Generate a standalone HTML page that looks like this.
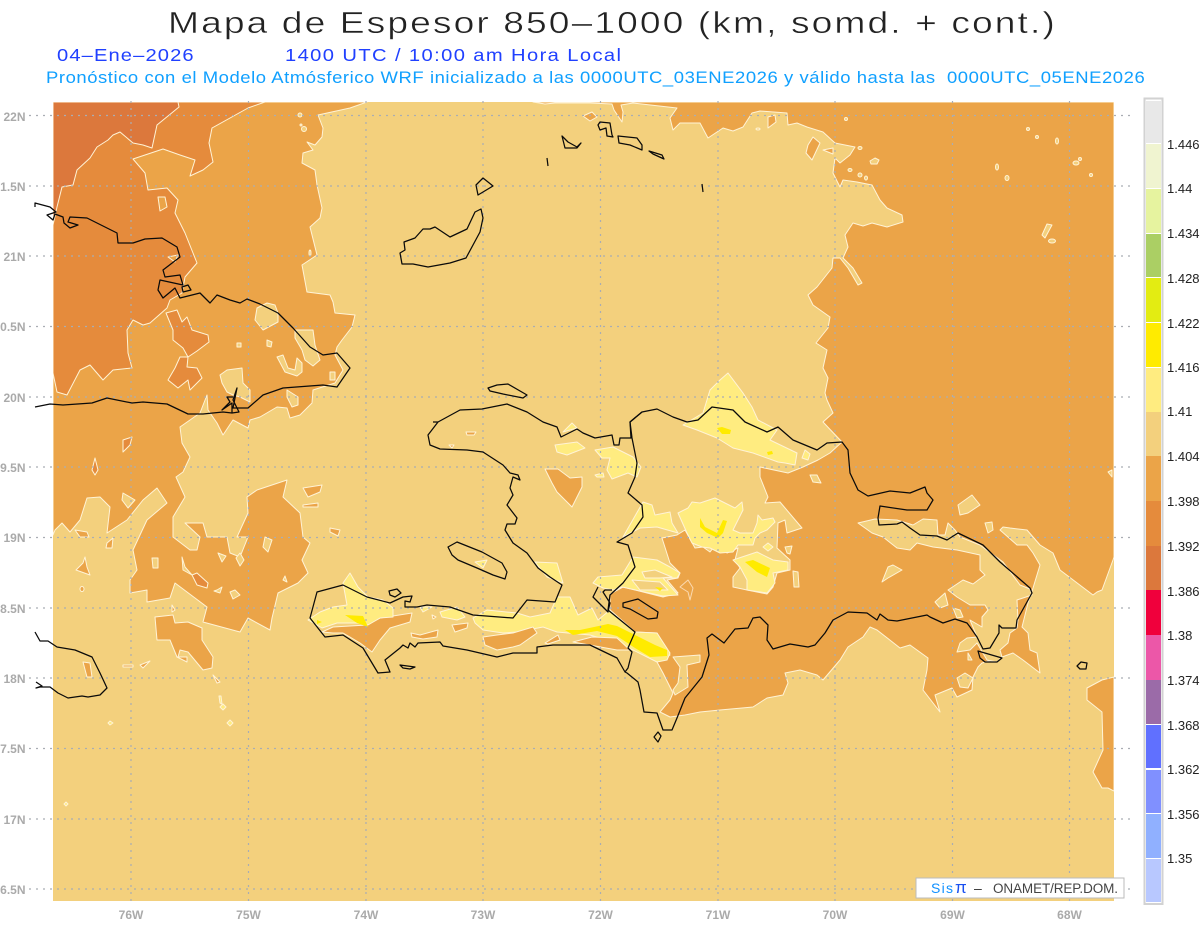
<!DOCTYPE html>
<html><head><meta charset="utf-8"><title>Mapa de Espesor</title>
<style>
html,body{margin:0;padding:0;background:#fff;width:1200px;height:927px;overflow:hidden}
svg{display:block}
text{font-family:"Liberation Sans",sans-serif}
.c{stroke:#fff3d6;stroke-width:1;stroke-linejoin:round}
.b{fill:#f3d07d}.o{fill:#eba448}.d{fill:#e58b3c}.x{fill:#dc783c}.y{fill:#ffec80}.z{fill:#ffeb00}
.k{fill:none;stroke:#0a0a0a;stroke-width:1.25;stroke-linejoin:round}
.g{stroke:#a9adb3;stroke-width:1.2;stroke-dasharray:2 5;fill:none}
.la{fill:#aaa;font-size:12px;font-weight:bold}
.cb{fill:#222;font-size:13px}
</style></head><body>
<svg width="1200" height="927" viewBox="0 0 1200 927" xmlns="http://www.w3.org/2000/svg">
<defs><clipPath id="m"><rect x="53" y="102" width="1061" height="799"/></clipPath></defs>
<text transform="translate(168,33) scale(1.2,1)" font-size="31" textLength="739" fill="#222" stroke="#fff" stroke-width=".45">Mapa de Espesor 850–1000 (km, somd. + cont.)</text>
<text transform="translate(57,61) scale(1.12,1)" font-size="18" textLength="122" fill="#2040ff">04–Ene–2026</text>
<text transform="translate(285,61) scale(1.12,1)" font-size="18" textLength="300" fill="#2040ff">1400 UTC / 10:00 am Hora Local</text>
<text transform="translate(46,83) scale(1.12,1)" font-size="16.5" textLength="981" fill="#10a0ff" xml:space="preserve">Pronóstico con el Modelo Atmósferico WRF inicializado a las 0000UTC_03ENE2026 y válido hasta las  0000UTC_05ENE2026</text>

<g clip-path="url(#m)">
<rect x="53" y="102" width="1061" height="799" class="b"/>
<!-- West orange A -->
<polygon class="o c" points="53,102 367,102 350,108 318,115 323,128 322,137 315,145 307,142 313,150 303,153 302,163 315,170 317,185 322,208 320,218 310,227 317,255 302,265 307,292 330,295 333,302 335,313 355,315 352,327 342,340 337,347 335,355 343,370 335,383 313,390 312,403 300,415 290,418 287,408 277,407 260,417 250,420 248,428 233,420 223,435 217,423 208,410 207,395 200,413 190,420 180,427 182,443 190,457 183,472 176,477 185,497 173,517 173,537 190,550 197,550 200,537 185,523 203,523 207,537 227,537 230,553 240,557 248,537 237,537 248,513 247,497 257,490 287,480 283,497 300,513 303,537 310,543 302,560 308,573 298,583 278,593 272,618 270,630 248,618 240,632 203,622 207,607 175,583 170,598 147,602 147,590 130,593 130,580 137,570 133,550 147,520 167,503 157,488 143,500 127,520 107,533 110,507 100,497 87,498 80,520 70,532 62,523 55,530 53,535"/>
<polygon class="o c" points="155,617 173,615 175,623 188,622 202,628 202,640 213,657 212,668 203,670 188,652 180,650 178,657 187,657 187,662 177,657 170,640 157,640"/>
<!-- East orange C -->
<polygon class="o c" points="533,102 545,104 555,103 590,103 612,104 614,110 622,122 623,112 621,105 633,103 677,108 670,118 673,130 680,123 700,123 708,138 723,128 733,131 743,127 752,113 760,111 787,113 788,125 797,123 807,127 823,132 835,143 855,147 850,155 840,163 835,158 833,173 840,187 843,180 857,182 872,185 880,200 887,208 902,215 903,222 887,227 872,223 863,226 853,223 845,235 848,247 843,258 853,268 862,283 858,285 848,268 840,258 833,258 832,268 817,287 808,295 813,305 830,317 828,328 816,343 827,350 823,368 828,378 825,393 827,400 833,413 823,422 842,442 830,453 818,460 803,467 788,473 760,467 760,477 768,497 765,503 780,502 802,528 787,533 785,520 778,523 777,548 790,560 790,570 777,573 773,587 767,594 747,590 733,587 733,577 740,568 735,560 738,548 727,553 717,543 710,552 703,547 695,548 685,530 677,535 662,538 670,563 680,573 678,578 667,580 678,593 663,597 623,587 610,594 610,610 635,632 657,633 670,655 657,662 663,673 673,693 670,700 660,712 670,717 685,715 700,712 720,710 753,707 767,698 783,695 788,683 785,673 800,670 817,675 823,680 840,660 848,647 863,637 870,627 877,630 900,648 910,645 928,658 927,670 923,690 940,712 935,695 952,688 957,697 972,690 973,677 978,667 982,663 1002,657 1013,653 1023,660 1040,673 1037,653 1030,650 1028,633 1022,627 1028,603 1033,588 1040,565 1033,553 1027,545 1017,545 1000,530 1003,527 1010,528 1027,530 1040,545 1053,553 1060,570 1093,595 1097,592 1102,590 1113,560 1114,557 1114,102"/>
<polygon class="o c" points="1114,677 1102,680 1087,688 1087,700 1102,712 1103,750 1093,772 1102,788 1108,788 1114,791"/>
<polygon class="b c" points="858,523 875,519 897,520 913,525 923,519 937,520 938,535 945,535 948,523 955,530 960,537 980,545 1003,562 1020,585 1030,589 1032,595 1023,598 1017,600 1018,620 1017,628 1010,633 1008,643 1000,650 1002,657 997,662 987,660 977,643 970,650 957,652 960,643 967,638 977,637 970,620 982,627 982,617 988,610 985,605 970,605 957,597 948,590 963,580 973,584 985,575 980,570 980,555 957,550 933,547 917,543 910,550 897,548 883,537 872,533"/>
<!-- dark orange -->
<polygon class="d c" points="265,102 248,108 212,128 209,143 213,162 203,170 190,176 195,160 180,155 163,149 133,159 145,173 148,190 167,188 178,200 175,213 185,233 193,253 197,263 185,277 182,293 170,300 167,308 150,323 143,325 133,320 127,330 128,353 132,368 113,370 103,380 90,365 80,370 67,395 57,392 53,373 53,102"/>
<polygon class="x c" points="53,102 178,102 179,107 157,125 152,148 143,145 133,143 120,132 113,135 108,140 97,147 90,158 77,170 73,185 62,187 57,207 53,225"/>
<polygon class="o c" points="158,197 165,197 167,207 160,211"/>
<polygon class="o c" points="168,257 178,255 175,262"/>
<polygon class="d c" points="166,313 177,310 182,322 187,317 192,330 208,335 209,342 197,351 188,357 183,348 173,340 173,330"/>
<polygon class="d c" points="180,357 188,357 187,367 197,368 202,378 190,390 188,380 178,388 168,380 175,368"/>
<polygon class="d c" points="123,440 132,437 130,445 123,452"/>
<polygon class="d c" points="95,458 98,470 95,475 92,470"/>
<polygon class="d c" points="192,575 197,573 208,583 207,588 197,585"/>
<polygon class="d c" points="680,587 688,580 693,588 690,600 688,592" style="fill:#eba448;stroke:#fbd9b0"/>
<!-- base islands in orange -->
<g class="b c">
<polygon points="257,308 267,303 275,305 278,313 278,322 263,330 255,320"/>
<polygon points="295,330 313,330 315,345 320,360 313,366 305,360 302,350 295,338"/>
<polygon points="277,357 283,355 288,368 295,370 297,358 302,363 302,372 297,376 285,372"/>
<polygon points="220,375 227,370 242,368 243,383 250,390 250,402 240,397 233,395 227,392 222,383"/>
<polygon points="287,390 298,397 298,405 292,407 287,397"/>
<polygon points="330,372 335,372 335,380 330,380"/>
<polygon points="237,343 241,343 241,347 237,347"/><polygon points="267,340 272,342 271,347 267,346"/>
<polygon points="123,493 135,500 128,508 122,500"/>
<polygon points="265,537 272,540 268,552 263,547"/>
<polygon points="218,553 226,556 222,562"/><polygon points="240,553 244,560 240,566 236,558"/>
<polygon points="152,558 158,558 158,568 153,568"/><polygon points="182,557 185,567 192,575 183,570"/>
<polygon points="230,592 235,590 240,595 233,599"/><polygon points="217,590 222,587 220,593 214,591"/>
<polygon points="285,576 287,582 283,580"/>
<polygon points="673,657 700,655 700,662 687,665 688,687 675,695 673,690 678,683 680,667"/>
<polygon points="882,582 888,567 893,565 902,570 888,578"/>
<polygon points="958,505 972,495 980,505 968,513 960,515"/>
<polygon points="985,523 992,522 993,530 988,533"/>
<polygon points="935,602 945,593 948,605 940,608"/>
<polygon points="957,678 965,673 973,678 968,688 960,687"/>
<polygon points="953,608 960,610 963,617 957,618"/>
<polygon points="968,653 972,660 968,660"/>
<polygon points="810,475 817,475 821,483 813,482"/>
<polygon points="1108,472 1112,470 1112,477"/>
<polygon points="785,547 792,546 790,554 787,553"/>
<polygon points="793,571 798,572 799,587 794,587"/>
<polygon points="870,161 875,158 879,160 877,164 871,164"/>
<polygon points="1042,235 1047,224 1052,225 1045,238"/>
<ellipse cx="860" cy="148" rx="2" ry="1.5"/><ellipse cx="850" cy="170" rx="2" ry="1.5"/><ellipse cx="860" cy="175" rx="2" ry="2"/><ellipse cx="866" cy="178" rx="1.5" ry="2"/>
<ellipse cx="1052" cy="241" rx="3.5" ry="2"/><ellipse cx="997" cy="167" rx="1.5" ry="3"/><ellipse cx="1007" cy="178" rx="2" ry="2.5"/><ellipse cx="1028" cy="129" rx="1.5" ry="1.5"/><ellipse cx="1037" cy="137" rx="1.5" ry="1.5"/><ellipse cx="1057" cy="141" rx="1.5" ry="3"/><ellipse cx="1076" cy="163" rx="3" ry="2"/><ellipse cx="1080" cy="159" rx="1.5" ry="1.5"/><ellipse cx="1091" cy="175" rx="1.5" ry="1.5"/><ellipse cx="846" cy="119" rx="1.5" ry="1.5"/><ellipse cx="758" cy="129" rx="2" ry="1"/>
<ellipse cx="300" cy="115" rx="2" ry="2"/><ellipse cx="304" cy="129" rx="2.5" ry="2.5"/><ellipse cx="301" cy="125" rx="1" ry="1"/>
<ellipse cx="310" cy="253" rx="1" ry="3"/>
</g>
<!-- orange blobs in base -->
<g class="o c">
<polygon points="768,117 775,115 776,122 768,128"/>
<polygon points="813,137 820,143 812,160 806,153 808,145"/>
<polygon points="823,150 833,148 833,154"/>
<polygon points="583,116 592,112 597,117 590,121"/>
<polygon points="75,530 87,532 89,537 80,537" />
<polygon points="107,543 113,538 112,548 106,548"/>
<polygon points="85,557 87,567 90,575 76,570 83,563"/>
<polygon points="303,488 322,485 320,492 308,497"/>
<polygon points="303,505 318,503 318,507 303,507"/>
<polygon points="330,528 340,530 338,536 330,532"/>
<polygon points="83,662 90,663 92,677 87,677"/>
<polygon points="123,665 133,665 133,667 123,667"/>
<polygon points="140,665 150,661 143,668"/>
<polygon points="213,675 220,682 217,683"/>
<polygon points="172,605 175,610 172,612"/>
<ellipse cx="82" cy="589" rx="2" ry="2.5"/>
<polygon points="545,469 558,469 570,478 582,477 582,487 572,507 557,492 552,483"/>
<polygon points="322,632 333,627 367,625 380,618 412,613 410,622 390,628 380,640 372,652 360,643 343,633 333,633"/>
<polygon points="411,633 420,635 438,630 437,637 423,639 412,637"/>
<polygon points="452,625 468,623 467,628 455,632"/>
<polygon points="466,432 476,432 474,435 467,435"/><polygon points="449,445 454,445 452,448"/>
<polygon points="432,615 436,617 433,619"/>
</g>
<!-- yellow -->
<g class="y c">
<polygon points="683,425 703,413 710,390 720,380 728,373 743,393 752,407 758,420 777,430 770,440 797,453 795,465 785,463 778,462 753,453 733,448 717,438 697,430"/>
<polygon points="678,513 688,508 692,502 700,503 715,498 723,502 735,508 742,502 743,510 733,530 740,533 753,533 757,523 758,515 762,520 773,518 775,522 767,530 760,533 755,538 753,545 738,545 733,552 720,553 710,548 702,547 692,543 687,533"/>
<polygon points="733,560 757,552 773,560 788,562 788,570 773,573 775,583 767,593 747,590 747,580 740,567"/>
<polygon points="593,583 598,577 622,575 633,557 657,560 670,567 680,573 677,578 663,578 678,595 663,596 622,587 613,590 603,588"/>
<polygon points="473,618 487,610 517,613 530,617 550,613 557,597 570,597 578,615 592,608 598,620 610,610 635,632 657,633 670,653 667,660 657,662 633,650 617,643 590,635 557,632 543,627 517,632 503,633 483,630 475,623"/>
<polygon points="308,620 320,612 333,607 347,605 343,583 350,573 358,587 368,597 383,600 393,608 393,617 380,618 368,625 357,623 337,623 322,628"/>
<polygon points="440,612 457,607 465,617 457,620 442,617"/>
<polygon points="420,607 432,607 423,612"/>
<polygon points="555,445 577,442 585,448 567,455 557,452"/>
<polygon points="563,432 572,423 577,428"/>
<polygon points="595,450 613,447 633,457 641,467 637,477 628,473 612,479 607,470 610,458 602,458"/>
<polygon points="595,475 603,473 604,477 597,477"/>
<polygon points="623,537 643,502 652,505 655,515 670,512 672,523 678,533 657,527 640,528"/>
<polygon points="535,562 557,563 563,583 547,577"/>
<polygon points="475,562 487,560 483,568"/>
<polygon points="763,547 768,543 773,547 768,551"/>
<polygon points="223,704 226,707 223,710 220,707"/><polygon points="230,720 233,723 230,726 227,723"/><polygon points="110,721 113,723 110,725 108,723"/><polygon points="66,802 68,804 66,806 64,804"/><polygon points="219,696 221,696 222,704 220,703"/>
<polygon points="805,450 810,454 808,460 802,458"/>
</g>
<g class="b c">
<polygon points="642,572 655,570 672,577 660,578 645,578"/>
<polygon points="632,580 660,582 668,590 640,590"/>
</g>
<g class="o c">
<polygon points="573,642 592,637 617,638 630,650 617,650"/>
<polygon points="483,637 497,635 513,633 533,627 537,633 520,645 513,647 497,650 485,645"/>
<polygon points="545,643 558,635 560,640 548,644"/>
</g>
<g fill="#ffeb00" stroke="none">
<polygon points="717,428 722,427 731,430 730,434 722,434"/>
<polygon points="767,452 772,451 773,454 768,455"/>
<polygon points="700,518 705,527 717,533 723,520 727,521 723,533 718,538 707,533 700,527"/>
<polygon points="745,562 753,560 770,568 767,577 757,572"/>
<polygon points="655,587 663,588 660,591"/>
<polygon points="565,630 580,630 608,624 617,626 633,634 655,645 667,650 667,656 650,657 635,648 617,636 597,631 573,635"/>
<polygon points="345,615 363,616 368,627 357,623"/>
<polygon points="317,620 322,622 317,624"/>
</g>
</g>

<!-- grid -->
<g class="g">
<path d="M29 115.5H1132M29 186H1132M29 256H1132M29 326.5H1132M29 397H1132M29 467H1132M29 537.5H1132M29 608H1132M29 678H1132M29 748.5H1132M29 819H1132M29 889H1132"/>
<path d="M131 101V905M248.5 101V905M366 101V905M483 101V905M600.5 101V905M718 101V905M835 101V905M952.5 101V905M1069.5 101V905"/>
</g>

<!-- coast -->
<g class="k">
<path d="M35 207L35 203 50 207 56 212 47 215 53 220 55 214 63 217 64 223 70 228 78 225 68 222 70 217 87 218 117 233 118 243 133 243 145 239 162 238 177 247 180 257 163 270 165 277 180 275 183 285 160 280 158 290 163 298 175 288 180 298 200 293 210 303 217 295 230 300 240 303 247 299 260 304 278 313 293 328 310 347 323 355 337 353 350 368 337 387 323 385 283 388 263 395 248 408 233 408 237 388 233 400 239 412 232 413 232 403 222 410 230 402 227 397 233 397M232 413L223 412 203 414 188 414 167 404 143 402 132 403 107 398 92 403 63 405 50 404 35 407"/>
<path d="M182 287L188 285 191 290 183 292Z"/>
<path d="M35 632L40 641 48 641 57 647 75 650 92 657 100 673 107 688 100 695 88 697 82 696 68 698 58 693 50 687 40 687 36 688 42 686 36 682"/>
<path d="M433 422L438 422 460 410 482 409 507 404 527 412 543 422 557 427 561 437 577 429 583 433 595 438 612 435 614 445 619 445 620 438 631 438 630 422 642 412 657 409 673 417 687 422 698 420 712 407 733 410 745 422 767 432 778 427 793 440 817 450 827 443 842 442 848 450 850 473 858 490 868 496 890 491 910 493 925 487 927 493 933 500 927 510 907 510 880 506 878 518 879 525 897 524 902 522 910 528 920 535 937 536 947 540 958 533 983 545 1000 562 1030 588 1032 593 1017 620 1016 628 1002 628 999 625 999 633 990 648 983 649 977 637 970 627 967 623 955 619 943 623 930 617 927 615 897 621 888 620 880 614 877 620 867 613 848 612 833 620 825 633 815 645 808 647 790 644 773 649 767 640 768 625 760 617 753 618 748 628 735 629 724 643 712 634 707 638 709 655 702 677 685 698 677 718 672 730 663 730 657 713 644 712 640 690 638 682 627 673 625 672 617 658 590 645 553 645 537 647 537 653 513 653 497 657 467 650 443 646 440 642 418 643 415 647 410 643 408 648 403 645 400 648 385 660 390 672 378 673 363 648 343 635 325 637 310 618 317 592 343 585 367 597 390 603 403 597 412 596 410 602 405 601 405 607 417 607 427 605 450 607 473 615 513 618 527 600 555 602 562 585 550 577 538 568 527 553 513 543 505 530 507 524 515 524 517 518 507 505 513 495 510 488 513 477 520 480 518 475 510 473 503 465 483 452 467 450 440 449 430 445 428 435 438 422"/>
<path d="M642 412L630 422 632 438 637 463 635 477 628 493 642 505 643 517 632 533 617 542 628 545 635 567 623 583 610 595 608 610 635 632 628 648 632 652 628 668 625 672"/>
<path d="M598 587L593 597 604 608 608 612 610 603 603 592 605 590 612 590"/>
<path d="M623 603L638 599 658 612 657 618 648 619 630 609 623 607Z"/>
<path d="M448 547L457 542 482 552 502 563 507 572 505 579 493 575 477 568 458 560 452 555Z"/>
<path d="M488 388L497 385 508 384 527 395 523 398 503 394 490 391Z"/>
<path d="M400 665L415 667 410 669 403 668Z"/>
<path d="M389 591L397 589 401 593 395 597 390 595Z"/>
<path d="M476 185L483 178 493 186 478 195Z"/>
<path d="M402 264L400 253 405 250 404 242 415 238 423 229 430 229 435 227 450 237 467 229 475 212 481 209 483 218 480 232 466 258 450 263 428 267 413 264Z"/>
<path d="M562 136L568 142 577 147 581 143 577 148 565 148Z"/>
<path d="M547 158L548 166"/><path d="M702 184L703 192"/>
<path d="M598 125L600 122 610 123 612 135 613 137 607 136 606 128 600 130Z"/>
<path d="M618 136L637 138 642 145 642 150 630 145 619 143Z"/>
<path d="M649 151L662 155 664 159 653 154Z"/>
<path d="M978 651L1002 658 997 662 985 662 980 658Z"/>
<path d="M1077 666L1081 662 1087 663 1086 669 1080 669Z"/>
<path d="M654 737L658 732 661 736 658 742Z"/>
</g>

<!-- axis labels -->
<g class="la" text-anchor="end">
<text x="25.5" y="121">22N</text><text x="25.5" y="191">1.5N</text><text x="25.5" y="261">21N</text><text x="25.5" y="331">0.5N</text><text x="25.5" y="402">20N</text><text x="25.5" y="472">9.5N</text><text x="25.5" y="542">19N</text><text x="25.5" y="613">8.5N</text><text x="25.5" y="683">18N</text><text x="25.5" y="753">7.5N</text><text x="25.5" y="824">17N</text><text x="25.5" y="894">6.5N</text>
</g>
<g class="la" text-anchor="middle">
<text x="131" y="919">76W</text><text x="248.5" y="919">75W</text><text x="366" y="919">74W</text><text x="483" y="919">73W</text><text x="600.5" y="919">72W</text><text x="718" y="919">71W</text><text x="835" y="919">70W</text><text x="952.5" y="919">69W</text><text x="1069.5" y="919">68W</text>
</g>

<!-- legend -->
<rect x="916" y="878" width="208" height="20" fill="#fff" stroke="#bbb" stroke-width="1"/>
<text x="931" y="893" font-size="14" textLength="22" fill="#1090ff">Sis</text>
<text x="955" y="893" font-size="17" textLength="13" fill="#1a50f0">π</text>
<text x="974" y="893" font-size="14" textLength="9" fill="#333">–</text>
<text x="993" y="893" font-size="13.5" textLength="125" fill="#444">ONAMET/REP.DOM.</text>

<!-- colorbar -->
<rect x="1144.5" y="98.5" width="18" height="805.5" fill="#fff" stroke="#d2d2d2" stroke-width="2"/>
<g>
<rect x="1146" y="101" width="15" height="42" fill="#e8e8e8"/>
<rect x="1146" y="144" width="15" height="44" fill="#f0f4d0"/>
<rect x="1146" y="189" width="15" height="44" fill="#e6f39f"/>
<rect x="1146" y="234" width="15" height="43" fill="#abcf64"/>
<rect x="1146" y="278" width="15" height="44" fill="#e3ec12"/>
<rect x="1146" y="323" width="15" height="44" fill="#ffeb00"/>
<rect x="1146" y="368" width="15" height="44" fill="#ffec80"/>
<rect x="1146" y="412" width="15" height="44" fill="#f3d07d"/>
<rect x="1146" y="456" width="15" height="45" fill="#eba448"/>
<rect x="1146" y="501" width="15" height="45" fill="#e58b3c"/>
<rect x="1146" y="546" width="15" height="44" fill="#dc783c"/>
<rect x="1146" y="590" width="15" height="45" fill="#f0003c"/>
<rect x="1146" y="635" width="15" height="45" fill="#ec57a8"/>
<rect x="1146" y="680" width="15" height="44" fill="#9b6ba8"/>
<rect x="1146" y="725" width="15" height="43" fill="#6070ff"/>
<rect x="1146" y="770" width="15" height="43" fill="#8090ff"/>
<rect x="1146" y="814" width="15" height="44" fill="#90b0ff"/>
<rect x="1146" y="859" width="15" height="43" fill="#b8c8ff"/>
</g>
<g class="cb">
<text x="1167" y="149">1.446</text><text x="1167" y="193">1.44</text><text x="1167" y="238">1.434</text><text x="1167" y="283">1.428</text><text x="1167" y="328">1.422</text><text x="1167" y="372">1.416</text><text x="1167" y="416">1.41</text><text x="1167" y="461">1.404</text><text x="1167" y="506">1.398</text><text x="1167" y="551">1.392</text><text x="1167" y="596">1.386</text><text x="1167" y="640">1.38</text><text x="1167" y="685">1.374</text><text x="1167" y="730">1.368</text><text x="1167" y="774">1.362</text><text x="1167" y="819">1.356</text><text x="1167" y="863">1.35</text>
</g>
</svg>
</body></html>
